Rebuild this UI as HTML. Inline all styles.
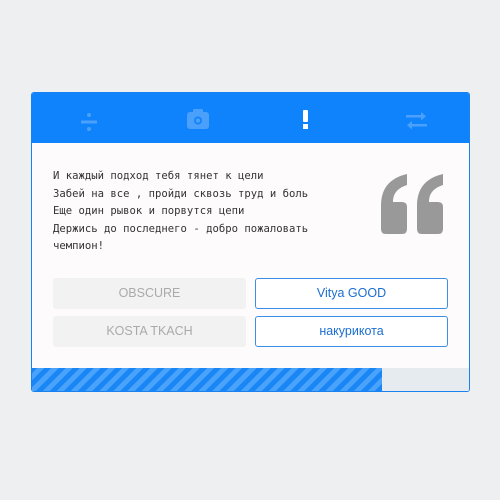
<!DOCTYPE html><html><head><style>
body{margin:0;width:500px;height:500px;background:#eeeff1;position:relative;font-family:"Liberation Sans",sans-serif}
.card{position:absolute;left:31px;top:92px;width:437px;height:298px;border:1px solid #1a82f0;border-radius:3px;background:#fdfbfb;overflow:hidden}
.hd{position:absolute;left:0;top:0;width:437px;height:50px;background:#0f83fb}
.txt{position:absolute;left:21px;top:75px;font-family:"DejaVu Sans Mono",monospace;font-size:10.6px;line-height:17.6px;color:#333;white-space:pre}
.b{position:absolute;width:193px;height:31px;box-sizing:border-box;font-size:12.5px;text-align:center;line-height:31px;border-radius:3px}
.g{background:#f2f2f3;color:#aaa}
.o{border:1px solid #3a8ee8;color:#1b6fd0;background:#fff;line-height:29px}
.pb{position:absolute;left:0;top:275px;width:437px;height:23px;background:#e6ebef}
.pf{position:absolute;left:0;top:0;width:350px;height:23px;background:repeating-linear-gradient(-45deg,#1a86f5 0 5px,#4aa3fa 5px 10px)}
</style></head><body>
<div class="card">
<div class="hd">
<svg width="437" height="50" style="position:absolute;left:0;top:0">
<g fill="#4ba0fb"><circle cx="57" cy="22" r="2"/><circle cx="57" cy="36" r="2"/><rect x="49" y="27.5" width="16" height="3"/></g>
<g fill="#4ba0fb"><rect x="155" y="19" width="22" height="17" rx="3"/><rect x="161" y="16" width="10" height="4" rx="1"/></g>
<circle cx="166" cy="27.5" r="4" fill="#0f83fb"/><circle cx="166" cy="27.5" r="2.3" fill="#4ba0fb"/>
<g fill="#fff"><rect x="271" y="17" width="5" height="12" rx="1"/><rect x="271" y="31" width="5" height="5"/></g>
<g fill="#4ba0fb"><rect x="374" y="22" width="16" height="2.5"/><polygon points="389,19 394,23.2 389,27.5"/><rect x="379" y="31" width="16" height="2.5"/><polygon points="380,28 375,32.2 380,36.5"/></g>
</svg></div>
<div class="txt">И каждый подход тебя тянет к цели
Забей на все , пройди сквозь труд и боль
Еще один рывок и порвутся цепи
Держись до последнего - добро пожаловать
чемпион!</div>
<svg width="70" height="65" style="position:absolute;left:349px;top:80px" fill="#999">
<path id="q" d="M26 1 C9 5 0 15 0 33 L0 56 Q0 61 5 61 L21 61 Q26 61 26 56 L26 34 Q26 29 21 29 L12 29 C12 20 17 15 26 12 Z"/>
<use href="#q" x="36"/>
</svg>
<div class="b g" style="left:21px;top:185px">OBSCURE</div>
<div class="b o" style="left:223px;top:185px">Vitya GOOD</div>
<div class="b g" style="left:21px;top:223px">KOSTA TKACH</div>
<div class="b o" style="left:223px;top:223px">накурикота</div>
<div class="pb"><div class="pf"></div></div>
</div>
</body></html>
